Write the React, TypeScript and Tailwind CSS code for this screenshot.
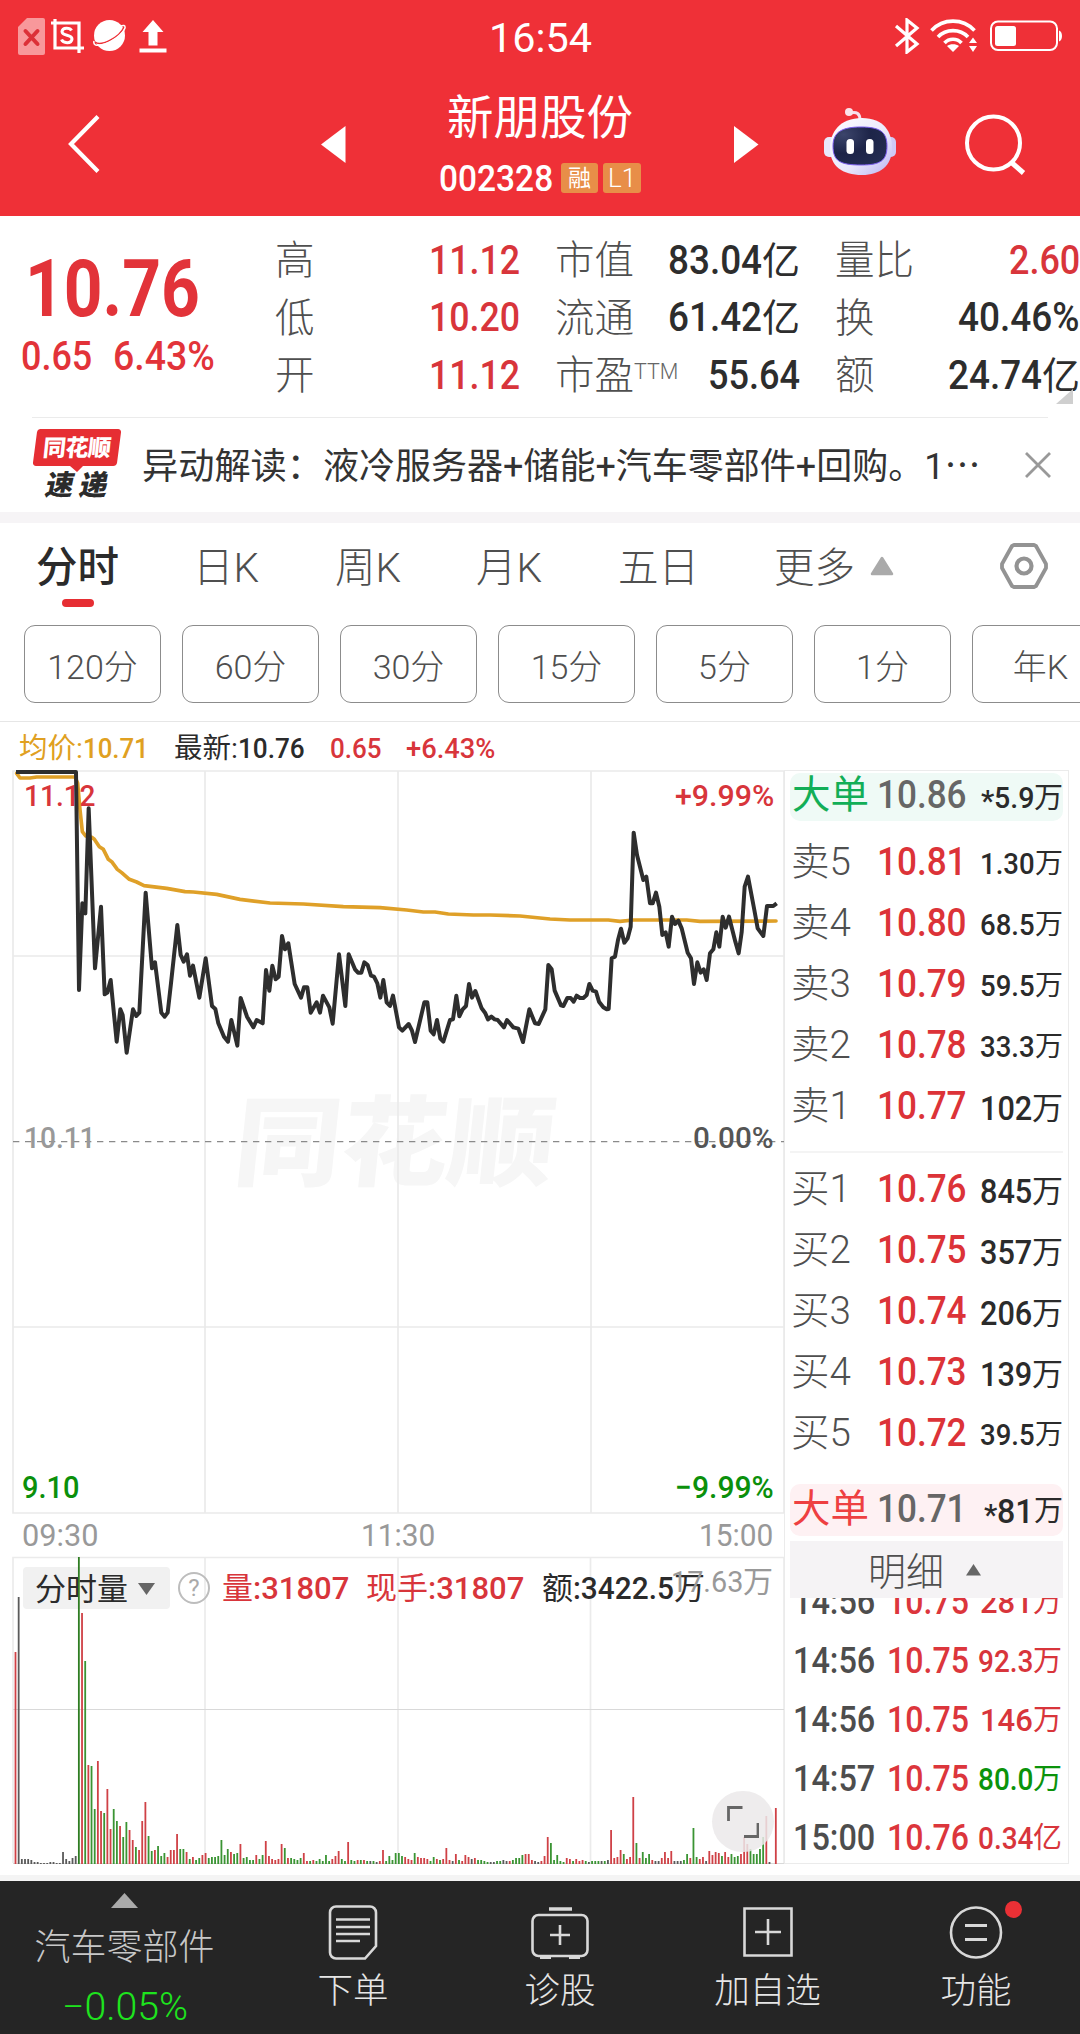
import { useLayoutEffect, useRef, useState } from "react";
import type { ReactNode } from "react";

const FONT = "font-['Roboto','Noto_Sans_CJK_SC',sans-serif]";

/* Text squeezed or stretched horizontally so that it fills a given width. */
function Fit({ w, className = "", children }: { w: number; className?: string; children: ReactNode }) {
  const ref = useRef<HTMLSpanElement>(null);
  const [scale, setScale] = useState(1);
  useLayoutEffect(() => {
    if (ref.current) setScale(w / ref.current.offsetWidth);
  }, [w]);
  return (
    <span className="flex shrink-0 justify-start" style={{ width: w }}>
      <span
        ref={ref}
        className={"inline-block shrink-0 origin-left whitespace-nowrap leading-none " + className}
        style={{ transform: `scaleX(${scale})` }}
      >
        {children}
      </span>
    </span>
  );
}

/* ------------------------------ header ------------------------------ */

function StatusBar() {
  return (
    <div className="flex h-[72px] items-center text-white">
      <div className="flex w-[470px] items-center pl-[18px]">
        <svg width="27" height="37" viewBox="0 0 27 37">
          <path d="M9 0H25a2 2 0 0 1 2 2V35a2 2 0 0 1-2 2H2a2 2 0 0 1-2-2V9Z" fill="#f8989b" />
          <path d="M7.500 13 19.500 26M19.500 13 7.500 26" stroke="#dc3038" strokeWidth="4" strokeLinecap="round" />
        </svg>
        <svg className="ml-[6px]" width="33" height="34" viewBox="0 0 33 34" fill="none" stroke="#fff">
          <path d="M0 4H28V34M4 0V29H33" strokeWidth="3.200" />
          <path d="M20.500 11.500C19 8.500 11.500 8 11 12.500C11 17.500 21 15 21 20C20.500 25 12 24.500 10.500 20.500" strokeWidth="3" />
        </svg>
        <svg className="ml-[9px]" width="33" height="34" viewBox="0 0 33 34">
          <circle cx="16.500" cy="16.500" r="15.500" fill="#fff" />
          <path d="M2 23C8 28 27 18 31 8" stroke="#ee2f36" strokeWidth="1.600" fill="none" />
          <path d="M1 22C0 26 3 27 8 26C18 24 30 15 32 9C32.500 6 30 6 28 7" stroke="#fff" strokeWidth="1.500" fill="none" />
        </svg>
        <svg className="ml-[13px]" width="28" height="33" viewBox="0 0 28 33" fill="#fff">
          <path d="M14 0 24.500 12H18.500V25.500H9.500V12H3.500Z" />
          <path d="M0.500 28.500H27.500V32.500H0.500Z" />
        </svg>
      </div>
      <div className="flex w-[140px] justify-center pt-[4px]">
        <Fit w={103} className="text-[41px]">16:54</Fit>
      </div>
      <div className="flex flex-1 items-center justify-end pr-[17px]">
        <svg width="26" height="36" viewBox="0 0 26 36" fill="none" stroke="#fff" strokeWidth="3.200">
          <path d="M2 8 23 26 13 34V2L23 10 2 28" />
        </svg>
        <svg className="ml-[10px]" width="48" height="34" viewBox="0 0 48 34" fill="none" stroke="#fff" strokeWidth="3.600">
          <path d="M1.500 11.500C13 -1 33 -1 44.500 11.500" />
          <path d="M8 18C16 9.500 30 9.500 38 18" />
          <path d="M14.500 24C19 19 27 19 31.500 24" />
          <path d="M23 33 17 27C20 24.500 26 24.500 29 27Z" fill="#fff" stroke="none" />
          <path d="M43 18.500 47 24H39ZM43 33 47 27H39Z" fill="#fff" stroke="none" />
        </svg>
        <svg className="ml-[12px]" width="73" height="32" viewBox="0 0 73 32">
          <rect x="1" y="1.500" width="66" height="28.500" rx="7" fill="none" stroke="#fff" strokeWidth="2" />
          <rect x="5" y="6" width="21" height="20" rx="2.500" fill="#fff" />
          <path d="M69 10.500C73 11.500 73 20.500 69 21.500Z" fill="#fff" />
        </svg>
      </div>
    </div>
  );
}

function Robot() {
  return (
    <svg className="ml-[65px] mt-[-5px]" width="72" height="67" viewBox="0 0 72 67">
      <defs>
        <linearGradient id="shell" x1="0" y1="0" x2="1" y2="1">
          <stop offset="0" stopColor="#fff" />
          <stop offset="0.600" stopColor="#e9e7fb" />
          <stop offset="1" stopColor="#b9b2f2" />
        </linearGradient>
        <radialGradient id="visor" cx="0.200" cy="0.200" r="1">
          <stop offset="0" stopColor="#3c456b" />
          <stop offset="0.500" stopColor="#1d2448" />
          <stop offset="1" stopColor="#242d52" />
        </radialGradient>
      </defs>
      <path d="M26 5C33 3 36 6 36 12" stroke="#f6dfec" strokeWidth="3" fill="none" />
      <circle cx="25" cy="4" r="4" fill="#fbe3ea" />
      <rect x="0" y="29" width="12" height="20" rx="5" fill="#e9e8fb" />
      <rect x="60" y="29" width="12" height="20" rx="5" fill="#cfc9f6" />
      <path d="M38 10C60 10 68 24 68 40C68 58 56 67 38 67C18 67 6 58 6 40C6 24 16 10 38 10Z" fill="url(#shell)" />
      <path d="M37 19C56 19 63 24 63 38C63 53 56 57 37 57C16 57 9 53 9 38C9 24 18 19 37 19Z" fill="url(#visor)" stroke="#7a5cf0" strokeWidth="1" />
      <rect x="22.500" y="31" width="7.500" height="15" rx="3.500" fill="#fff" />
      <rect x="42" y="31" width="7.500" height="15" rx="3.500" fill="#fff" />
    </svg>
  );
}

function TitleBar() {
  return (
    <div className="flex h-[144px] items-center text-white">
      <svg className="ml-[67px]" width="33" height="60" viewBox="0 0 33 60" fill="none" stroke="#fff" strokeWidth="4.200">
        <path d="M31 2.500 4 30 31 57.500" />
      </svg>
      <svg className="ml-[221px]" width="25" height="37" viewBox="0 0 25 37" fill="#fff">
        <path d="M0 18.500 24.500 0V37Z" />
      </svg>
      <div className="flex w-[388px] flex-col items-center">
        <div className="mt-[-1px] text-[46.500px] leading-[54px]">新朋股份</div>
        <div className="mt-[15px] flex items-center">
          <Fit w={114} className="text-[37px] font-medium">002328</Fit>
          <span className="ml-[8px] flex h-[30px] w-[37px] items-center justify-center rounded-[3px] bg-[#e88e48] pt-[1px] text-[23px] leading-none">融</span>
          <span className="ml-[5px] flex h-[30px] w-[38px] items-center justify-center rounded-[3px] bg-[#e88e48] text-[26px] font-light leading-none">L1</span>
        </div>
      </div>
      <svg width="25" height="37" viewBox="0 0 25 37" fill="#fff">
        <path d="M24.500 18.500 0 0V37Z" />
      </svg>
      <Robot />
      <svg className="ml-[68px]" width="62" height="62" viewBox="0 0 62 62" fill="none" stroke="#fff" strokeWidth="4">
        <circle cx="29.500" cy="30" r="26.500" />
        <path d="M47 49 59.500 60" strokeWidth="5" />
      </svg>
    </div>
  );
}

/* ------------------------------ quote ------------------------------ */

type Stat = { label: string; sup?: string; value: string; w: number; unit?: string; red?: boolean };

const STATS: Stat[][] = [
  [
    { label: "高", value: "11.12", w: 91, red: true },
    { label: "低", value: "10.20", w: 91, red: true },
    { label: "开", value: "11.12", w: 91, red: true },
  ],
  [
    { label: "市值", value: "83.04", w: 94, unit: "亿" },
    { label: "流通", value: "61.42", w: 94, unit: "亿" },
    { label: "市盈", sup: "TTM", value: "55.64", w: 92 },
  ],
  [
    { label: "量比", value: "2.60", w: 71, red: true },
    { label: "换", value: "40.46%", w: 122 },
    { label: "额", value: "24.74", w: 94, unit: "亿" },
  ],
];

function Quote() {
  return (
    <section className="relative flex h-[201px] pt-[16px]">
      <div className="w-[277px] text-[#e23339]">
        <div className="pl-[25px] pt-[17px]">
          <Fit w={175} className="text-[80px] font-bold">10.76</Fit>
        </div>
        <div className="flex gap-[21px] pl-[21px] pt-[8px]">
          <Fit w={71} className="text-[40px] font-medium">0.65</Fit>
          <Fit w={102} className="text-[40px] font-medium">6.43%</Fit>
        </div>
      </div>
      <div className="flex gap-[35px]">
        {STATS.map((column, i) => (
          <div key={i} className="flex w-[245px] flex-col">
            {column.map((s) => (
              <div key={s.label} className="flex h-[57.500px] items-center">
                <span className="text-[39.500px] font-light leading-none text-[#4f4f4f]">{s.label}</span>
                {s.sup && <span className="pb-[8px] text-[21.500px] font-light leading-none text-[#666]">{s.sup}</span>}
                <span className={"ml-auto flex items-center font-medium " + (s.red ? "text-[#d8353b]" : "text-[#2d2d2d]")}>
                  <Fit w={s.w} className="text-[40px]">{s.value}</Fit>
                  {s.unit && <span className="text-[38px] font-normal leading-none">{s.unit}</span>}
                </span>
              </div>
            ))}
          </div>
        ))}
      </div>
      <svg className="absolute right-[7px] top-[173px]" width="17" height="15" viewBox="0 0 17 15">
        <path d="M17 0V15H0Z" fill="#cfcfcf" />
      </svg>
    </section>
  );
}

function News() {
  return (
    <section className="flex h-[95px] items-start">
      <div className="relative ml-[33px] mt-[11px] h-[74px] w-[88px]">
        <svg className="absolute left-0 top-0" width="88" height="43" viewBox="0 0 88 43" fill="#e62e33">
          <path d="M7 0H85a3 3 0 0 1 3 3.500L84 34a4 4 0 0 1-4 3H50L44 43 37 37H3a3 3 0 0 1-3-3.500L4 3A3.500 3.500 0 0 1 7 0Z" />
        </svg>
        <div className="relative flex h-[37px] items-center justify-center pt-[1px]">
          <span className="-skew-x-6 text-[23px] font-black leading-none tracking-[-0.500px] text-white">同花顺</span>
        </div>
        <div className="relative mt-[6px] flex justify-center gap-[5px] text-[28px] font-black leading-none text-[#2b2b2b]">
          <span className="-skew-x-12">速</span>
          <span className="-skew-x-12">递</span>
        </div>
      </div>
      <div className="ml-[21px] mt-[31px] flex w-[883px] text-[36px] leading-none text-[#333]">
        <Fit w={181}>异动解读：</Fit>
        <Fit w={658}>液冷服务器+储能+汽车零部件+回购。1⋯</Fit>
      </div>
      <svg className="mt-[34px]" width="26" height="26" viewBox="0 0 26 26" stroke="#999" strokeWidth="2.800">
        <path d="M1 1 25 25M25 1 1 25" />
      </svg>
    </section>
  );
}

/* ------------------------------ period tabs ------------------------------ */

const MINUTES = ["120分", "60分", "30分", "15分", "5分", "1分", "年K"];

function Tabs() {
  return (
    <section>
      <div className="relative flex h-[86px] items-center text-[40.500px] font-light leading-none text-[#4f4f4f]">
        <span className="w-[160px] pl-[36px] pt-[4px] text-[41.500px] font-medium text-[#2b2b2b]">分时</span>
        <span className="w-[139px] pl-[33px] pt-[4px]">日K</span>
        <span className="w-[141px] pl-[36px] pt-[4px]">周K</span>
        <span className="w-[141px] pl-[36px] pt-[4px]">月K</span>
        <span className="w-[156px] pl-[37px] pt-[4px]">五日</span>
        <span className="w-[119px] pl-[37px] pt-[4px]">更多</span>
        <svg className="ml-[14px]" width="24" height="20" viewBox="0 0 24 20">
          <path d="M12 2 22 18H2Z" fill="#aaa" stroke="#aaa" strokeWidth="2.500" strokeLinejoin="round" />
        </svg>
        <svg className="ml-[105px]" width="50" height="48" viewBox="0 0 50 48" fill="none" stroke="#939393" strokeWidth="3.800" strokeLinejoin="round">
          <path d="M15 3H35L37 4 47 22V26L37 44 35 45H15L13 44 3 26V22L13 4Z" />
          <circle cx="25" cy="24" r="7.500" strokeWidth="4.200" />
        </svg>
        <span className="absolute bottom-[2px] left-[62px] h-[8px] w-[32px] rounded-full bg-[#e62e33]" />
      </div>
      <div className="flex gap-[21px] overflow-hidden pl-[24px] pt-[16px]">
        {MINUTES.map((m) => (
          <div key={m} className="flex h-[78px] w-[137px] shrink-0 items-center justify-center rounded-[11px] border border-[#8c8c8c] pt-[5px] text-[34px] font-light leading-none text-[#4f4f4f]">
            {m}
          </div>
        ))}
      </div>
      <div className="mt-[18px] h-px bg-[#e6e6e6]" />
    </section>
  );
}

function Legend() {
  return (
    <div className="flex h-[48px] items-center pl-[19px] pt-[6px] text-[28.500px] leading-none">
      <span className="flex w-[155px] items-center text-[#e0a021]">
        均价:<Fit w={66} className="font-medium">10.71</Fit>
      </span>
      <span className="flex w-[156px] items-center text-[#2b2b2b]">
        最新:<Fit w={67} className="font-medium">10.76</Fit>
      </span>
      <span className="flex w-[76px] text-[#d8353b]">
        <Fit w={52} className="font-medium">0.65</Fit>
      </span>
      <span className="flex text-[#d8353b]">
        <Fit w={89} className="font-medium">+6.43%</Fit>
      </span>
    </div>
  );
}

/* ------------------------------ charts ------------------------------ */

const PRICE =
  "48,36 228,36 237,690 247,430 256,460 266,145 285,625 303,440 314,703 322,698 332,660 350,845 361,748 368,765 380,878 399,748 409,768 418,758 437,398 456,625 465,607 484,758 494,770 503,758 513,670 532,495 542,585 551,605 561,583 570,647 579,617 598,713 617,595 636,738 646,747 655,790 672,830 684,845 694,780 712,857 722,714 741,770 760,802 770,780 788,790 798,630 808,692 817,617 827,658 836,650 846,528 855,568 865,550 884,672 903,713 912,682 922,682 932,758 950,727 960,758 969,707 988,742 998,791 1017,583 1036,738 1046,583 1065,628 1074,638 1084,638 1093,607 1103,615 1113,647 1122,650 1132,670 1141,713 1150,660 1160,727 1170,738 1179,707 1197,802 1207,812 1226,792 1236,812 1245,846 1273,727 1282,727 1292,812 1301,823 1311,780 1321,836 1330,845 1350,780 1359,778 1369,707 1378,769 1388,748 1398,738 1407,672 1416,713 1426,693 1445,745 1455,758 1464,778 1474,770 1484,778 1493,780 1512,802 1521,780 1540,802 1555,806 1569,846 1588,748 1605,790 1616,792 1636,748 1645,615 1655,628 1664,692 1683,736 1690,738 1702,714 1712,714 1721,725 1730,707 1740,714 1750,714 1760,705 1768,672 1778,692 1788,695 1797,725 1810,742 1820,748 1826,747 1835,595 1845,590 1854,540 1863,506 1873,548 1883,535 1892,500 1901,218 1911,285 1930,360 1939,350 1950,430 1958,430 1968,398 1978,440 1987,525 1997,517 2006,560 2016,470 2025,492 2035,482 2045,505 2063,578 2073,595 2082,672 2092,607 2102,638 2111,628 2120,660 2130,580 2140,568 2149,517 2158,560 2168,470 2177,503 2187,470 2206,545 2216,580 2225,517 2234,380 2244,350 2263,450 2273,505 2290,528 2301,438 2320,438 2330,430";

const AVERAGE =
  "50,40 60,54 90,54 110,51 225,51 233,70 240,150 247,215 257,228 275,232 283,238 298,260 310,268 325,298 335,305 352,328 365,338 388,358 410,366 432,377 500,385 555,395 580,396 650,403 720,418 810,429 910,432 1030,440 1140,443 1220,450 1270,456 1305,456 1345,462 1420,465 1470,465 1560,468 1650,477 1710,480 1825,480 1860,484 1900,480 2060,480 2100,484 2328,483";

/* One token per minute: colour key followed by the bar's height. */
const VOLUME = [
  "r212 k267 k5 k5 k5 k4 k2 k2 k1 k1 k1 k2 k2 k1 k1 k12 k5 k3 k6 k8",
  "G307 r251 g203 r99 g98 g55 r103 r53 g51 r75 r35 g55 g43 r38 g27 g42 r34 r24 g17 r14",
  "r43 r62 g28 g13 r14 g18 g8 g11 r7 r14 r14 r30 g15 g15 r12 g5 r7 g4 g6 r9",
  "r11 g6 g7 g7 g8 g24 g9 g15 r12 g10 g11 r20 g6 g7 g4 g4 r9 g5 g9 r23",
  "r8 r5 r4 r5 r20 g16 r6 g6 g5 g4 g6 r11 r3 g3 r4 g3 g5 g3 g9 g3",
  "r5 r8 r13 g5 g3 r22 g4 g3 r4 g4 r4 g3 k3 g3 k2 r3 r14 g3 g8 g4",
  "g11 g11 g8 r7 r5 r4 g11 r7 r6 r6 r5 g3 g7 r5 g4 r5 r16 r4 k3 r10",
  "g4 r3 r9 r7 k5 r6 g4 g4 g3 g2 k2 k2 g3 g3 k4 k3 r3 g4 g6 g6",
  "g9 r10 r10 r4 k3 k2 r3 r8 r27 g21 g4 g9 g3 g2 r6 r5 g3 r5 r3 r4",
  "g3 k2 g3 g3 g3 k3 g3 k4 r34 r6 r7 r14 g10 r5 r7 r67 g21 r6 g12 g6",
  "g10 r4 k3 k3 r6 r12 r6 r13 k3 k3 k3 g4 g10 r6 g36 g7 r5 r7 k3 r13",
  "r9 r12 r11 g8 r12 r7 g10 g7 g8 r10 r27 r20 g15 g10 g10 g15 g27 r48 k2 k0 r56",
];

const BAR_COLOR: Record<string, string> = { r: "#cf4146", g: "#3a9433", G: "#2f7d22", k: "#5a5a5a" };

function PriceChart() {
  return (
    <div className="relative h-[743px] w-[771px]">
      <span className="absolute left-[222px] top-[325px] flex -skew-x-6">
        <Fit w={320} className="text-[98px] font-black text-[#f6f6f6]">同花顺</Fit>
      </span>
      <svg className="absolute left-0 top-0 overflow-visible" width="771" height="742" viewBox="39 33 2313 2226" fill="none">
        <g stroke="#eaeaea" strokeWidth="5">
          <path d="M39 33H2352V2259H39Z" />
          <path d="M39 588H2352M39 1701H2352M615 33V2259M1194 33V2259M1773 33V2259" />
        </g>
        <path d="M39 1145H2352" stroke="#8a8a8a" strokeWidth="4" strokeDasharray="19 17" />
        <polyline points={AVERAGE} stroke="#dfa028" strokeWidth="11" strokeLinejoin="round" strokeLinecap="round" />
      </svg>
      <span className="absolute left-[11px] top-[10px] text-[#d8353b]"><Fit w={72} className="text-[30px] font-medium">11.12</Fit></span>
      <span className="absolute right-[10px] top-[10px] text-[#d8353b]"><Fit w={99} className="text-[30px] font-medium">+9.99%</Fit></span>
      <span className="absolute left-[11px] top-[352px] text-[#999]"><Fit w={72} className="text-[30px] font-medium">10.11</Fit></span>
      <span className="absolute right-[10px] top-[352px] text-[#555]"><Fit w={81} className="text-[30px] font-medium">0.00%</Fit></span>
      <span className="absolute left-[9px] top-[701px] text-[#0b900b]"><Fit w={57} className="text-[31px] font-medium">9.10</Fit></span>
      <span className="absolute right-[10px] top-[701px] text-[#0b900b]"><Fit w={99} className="text-[31px] font-medium">−9.99%</Fit></span>
      <svg className="absolute left-0 top-0 overflow-visible" width="771" height="742" viewBox="39 33 2313 2226" fill="none">
        <polyline points={PRICE} stroke="#2e2e2e" strokeWidth="12" strokeLinejoin="round" strokeLinecap="butt" />
      </svg>
    </div>
  );
}

function TimeAxis() {
  return (
    <div className="flex h-[43px] w-[771px] items-center justify-between pl-[9px] pr-[11px] text-[31.500px] text-[#999]">
      <Fit w={76}>09:30</Fit>
      <span className="pr-[2px]"><Fit w={74}>11:30</Fit></span>
      <Fit w={74}>15:00</Fit>
    </div>
  );
}

function VolumeChart() {
  return (
    <div className="relative h-[307px] w-[771px]">
      <svg className="absolute left-0 top-0 overflow-visible" width="771" height="307" viewBox="0 0 771 307" fill="none">
        <path d="M0 306V0.500H771V306M192 0V306M385 0V306M577.500 0V306" stroke="#ebebeb" strokeWidth="1.700" />
        <path d="M0 152.500H771M0 306.500H771" stroke="#d9d9d9" />
      </svg>
      <div className="absolute left-[10px] top-[10px] flex h-[42px] w-[147px] items-center rounded-[4px] bg-[#f1f1f1] pl-[12px] pt-[2px] text-[31px] leading-none text-[#2b2b2b]">
        分时量
        <svg className="ml-[9px]" width="19" height="14" viewBox="0 0 19 14">
          <path d="M1 1H18L9.500 13Z" fill="#666" />
        </svg>
      </div>
      <svg className="absolute left-0 top-0" width="771" height="307" viewBox="0 0 771 307">
        {VOLUME.join(" ").split(" ").map((token, i) => {
          const h = Number(token.slice(1));
          return (
            <rect key={i} x={1.600 + i * 3.168} y={307 - h} width="1.800" height={h} fill={BAR_COLOR[token[0]]} />
          );
        })}
      </svg>
      <div className="absolute left-[165px] top-[15px] flex items-center text-[31px] leading-none">
        <span className="flex h-[32px] w-[32px] items-center justify-center rounded-full border-2 border-[#bdbdbd] text-[24px] text-[#aaa]">?</span>
        <span className="ml-[12px] flex w-[144px] items-center text-[#d8353b]">
          量<Fit w={96} className="font-medium">:31807</Fit>
        </span>
        <span className="flex w-[176px] items-center text-[#d8353b]">
          现手<Fit w={96} className="font-medium">:31807</Fit>
        </span>
        <span className="flex items-center text-[#2b2b2b]">
          额<Fit w={101} className="font-medium">:3422.5</Fit>万
        </span>
      </div>
      <div className="absolute right-[11px] top-[10px] flex items-center text-[30px] leading-none text-[#999]">
        <Fit w={72}>17.63</Fit>万
      </div>
      <div className="absolute bottom-[12px] right-[10px] flex h-[61px] w-[62px] items-center justify-center rounded-full bg-[#ebe9ea]/85">
        <svg width="32" height="32" viewBox="0 0 32 32" fill="none" stroke="#666" strokeWidth="2.800">
          <path d="M1.500 15V1.500H15.500M31 17V30.500H17" />
        </svg>
      </div>
    </div>
  );
}

/* ------------------------------ order book ------------------------------ */

type Level = [label: string, price: string, volume: string, big?: boolean];

const ASKS: Level[] = [
  ["卖5", "10.81", "1.30"],
  ["卖4", "10.80", "68.5"],
  ["卖3", "10.79", "59.5"],
  ["卖2", "10.78", "33.3"],
  ["卖1", "10.77", "102", true],
];
const BIDS: Level[] = [
  ["买1", "10.76", "845", true],
  ["买2", "10.75", "357", true],
  ["买3", "10.74", "206", true],
  ["买4", "10.73", "139", true],
  ["买5", "10.72", "39.5"],
];

function LevelRow({ level: [label, price, volume, big] }: { level: Level }) {
  return (
    <div className="flex h-[61px] items-center pl-[6px] leading-none">
      <span className="w-[86px] text-[38.500px] font-light text-[#4f4f4f]">{label}</span>
      <Fit w={90} className="text-[39px] font-medium text-[#dc3338]">{price}</Fit>
      <span className="ml-auto mr-[5px] flex items-center pt-[3px] text-[#2b2b2b]">
        {big ? (
          <>
            <Fit w={52} className="text-[33px] font-medium">{volume}</Fit>
            <span className="text-[31px]">万</span>
          </>
        ) : (
          <>
            <Fit w={55} className="text-[30px] font-medium">{volume}</Fit>
            <span className="text-[28px]">万</span>
          </>
        )}
      </span>
    </div>
  );
}

function BigOrder({ price, volume, sell }: { price: string; volume: string; sell?: boolean }) {
  return (
    <div className={"mx-[5px] flex items-center rounded-[10px] pl-[2px] leading-none " + (sell ? "h-[48px] bg-[#effaf6] pb-[3px] text-[#12ae57]" : "h-[52px] bg-[#fef1f3] pb-[2px] text-[#ee4041]")}>
      <span className="w-[85px] text-[38.500px]">大单</span>
      <Fit w={90} className="text-[39px] font-medium text-[#666]">{price}</Fit>
      <span className="ml-auto flex items-center pt-[5px] text-[#2b2b2b]">
        <span className="flex pt-[6px]"><Fit w={13} className="text-[30px] font-medium">*</Fit></span>
        <Fit w={sell ? 40 : 37} className={sell ? "text-[30px] font-medium" : "text-[33px] font-medium"}>{volume}</Fit>
        <span className="text-[29px]">万</span>
      </span>
    </div>
  );
}

const TRADES = [
  { time: "14:56", price: "10.75", volume: "281", w: 53, unit: "万", up: true },
  { time: "14:56", price: "10.75", volume: "92.3", w: 55, unit: "万", up: true },
  { time: "14:56", price: "10.75", volume: "146", w: 53, unit: "万", up: true },
  { time: "14:57", price: "10.75", volume: "80.0", w: 55, unit: "万", up: false },
  { time: "15:00", price: "10.76", volume: "0.34", w: 55, unit: "亿", up: true },
];

function OrderBook() {
  return (
    <div className="h-[1094px] w-[285px] border border-[#ebebeb] pt-[2px]">
      <BigOrder sell price="10.86" volume="5.9" />
      <div className="mt-[11px]">
        {ASKS.map((l) => <LevelRow key={l[0]} level={l} />)}
      </div>
      <div className="mx-[5px] mt-[14px] h-[2px] bg-[#f4f4f4]" />
      <div className="mt-[6px]">
        {BIDS.map((l) => <LevelRow key={l[0]} level={l} />)}
      </div>
      <div className="h-[20px]" />
      <BigOrder price="10.71" volume="81" />
      <div className="mx-[5px] mt-[5px] flex h-[57px] items-center justify-center bg-[#f5f3f5] pr-[4px] text-[38px] font-light leading-none text-[#4f4f4f]">
        <span className="pt-[4px]">明细</span>
        <svg className="ml-[22px]" width="15" height="12" viewBox="0 0 15 12">
          <path d="M7.500 0 15 11.500H0Z" fill="#666" />
        </svg>
      </div>
      <div className="flex h-[265px] flex-col justify-end overflow-hidden">
        {TRADES.map((t, i) => (
          <div key={i} className="flex h-[59px] shrink-0 items-center pl-[8px] pt-[8px] font-medium leading-none">
            <span className="w-[94px]"><Fit w={82} className="text-[36px] text-[#4d4d4d]">{t.time}</Fit></span>
            <Fit w={82} className="text-[36px] text-[#dc363c]">{t.price}</Fit>
            <span className={"ml-auto mr-[6px] flex items-center pt-[2px] " + (t.up ? "text-[#d8353b]" : "text-[#0b930b]")}>
              <Fit w={t.w} className="text-[31px]">{t.volume}</Fit>
              <span className="text-[29px] font-normal">{t.unit}</span>
            </span>
          </div>
        ))}
      </div>
    </div>
  );
}

/* ------------------------------ bottom bar ------------------------------ */

function NavItem({ className, label, children }: { className: string; label: string; children: ReactNode }) {
  return (
    <div className={"flex flex-col items-center " + className}>
      <div className="flex h-[54px] items-center">{children}</div>
      <div className="mt-[15px] text-[35.500px] font-light leading-none text-[#e6e6e6]">{label}</div>
    </div>
  );
}

function BottomBar() {
  return (
    <nav className="flex h-[153px] bg-[#252525]">
      <div className="flex w-[249px] flex-col items-center pt-[12px] leading-none">
        <svg width="27" height="15" viewBox="0 0 27 15"><path d="M13.500 0 27 15H0Z" fill="#aaa" /></svg>
        <div className="mt-[22px] text-[36px] font-light text-[#c8c8c8]">汽车零部件</div>
        <div className="mt-[22px] flex pl-px text-[#1ee41e]">
          <Fit w={126} className="text-[38px] font-light">−0.05%</Fit>
        </div>
      </div>
      <NavItem className="w-[208px] pt-[24px]" label="下单">
        <svg width="50" height="55" viewBox="0 0 50 55" fill="none" stroke="#d8d8d8" strokeWidth="2.600">
          <path d="M8 1.500H42a6 6 0 0 1 6 6V41L37 53.500H8a6 6 0 0 1-6-6V7.500a6 6 0 0 1 6-6Z" />
          <path d="M8 14.500H42M8 22H42M8 29H42M8 36H32" />
        </svg>
      </NavItem>
      <NavItem className="w-[206px] pt-[24px]" label="诊股">
        <svg width="58" height="54" viewBox="0 0 58 54" fill="none" stroke="#d8d8d8" strokeWidth="2.600">
          <path d="M18 4H41" strokeWidth="3.500" />
          <rect x="1.500" y="10" width="55" height="41" rx="6" />
          <path d="M29 20V40M19 30H39" />
          <path d="M9 52.500H20M38 52.500H49" strokeWidth="3" />
        </svg>
      </NavItem>
      <NavItem className="w-[209px] pt-[24px]" label="加自选">
        <svg width="50" height="50" viewBox="0 0 50 50" fill="none" stroke="#d8d8d8" strokeWidth="2.600">
          <path d="M1.500 1.500H48.500V48.500H1.500ZM25 12V38M12 25H38" />
        </svg>
      </NavItem>
      <div className="relative">
        <NavItem className="w-[208px] pt-[24px]" label="功能">
          <svg width="54" height="54" viewBox="0 0 54 54" fill="none" stroke="#d8d8d8" strokeWidth="2.600">
            <circle cx="27" cy="27.500" r="25" />
            <path d="M16 20.500H38M16 34.500H38" strokeWidth="3" />
          </svg>
        </NavItem>
        <span className="absolute left-[133px] top-[20px] h-[17px] w-[17px] rounded-full bg-[#ea3035]" />
      </div>
    </nav>
  );
}

export default function App() {
  return (
    <div className={"w-[1080px] overflow-hidden bg-white antialiased " + FONT} lang="zh-CN">
      <header className="h-[216px] bg-[#ef3037]">
        <StatusBar />
        <TitleBar />
      </header>
      <Quote />
      <div className="ml-[32px] mr-[32px] h-px bg-[#ebebeb]" />
      <News />
      <div className="mt-[-1px] h-[11px] bg-[#f6f4f6]" />
      <Tabs />
      <Legend />
      <main className="flex h-[1105px] pl-[13px]">
        <div className="pt-px">
          <PriceChart />
          <TimeAxis />
          <VolumeChart />
        </div>
        <OrderBook />
      </main>
      <div className="h-[6px] bg-[#f4f4f4]" />
      <BottomBar />
    </div>
  );
}
